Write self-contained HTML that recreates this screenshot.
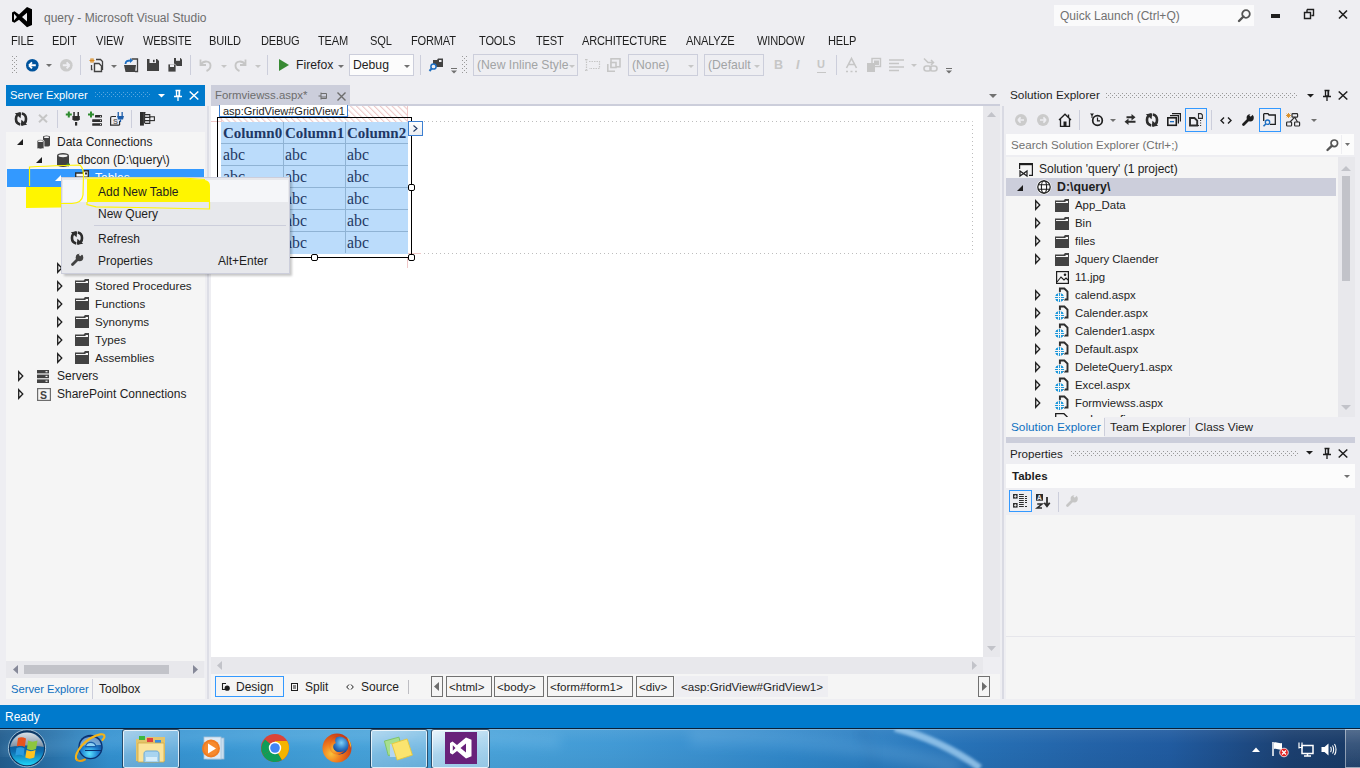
<!DOCTYPE html>
<html><head><meta charset="utf-8">
<style>
*{box-sizing:border-box;margin:0;padding:0}
html,body{width:1360px;height:768px;overflow:hidden;background:#EEEEF2;font-family:"Liberation Sans",sans-serif;font-size:12px;color:#1E1E1E;position:relative}
.a{position:absolute}
.t{position:absolute;white-space:pre;line-height:14px}
svg{position:absolute;overflow:visible}
</style></head><body>
<svg style="left:12px;top:7px" width="21" height="21" viewBox="0 0 21 21"><path d="M15 0 L20 2.2 L20 18 L15 20.2 L7 12.7 L2.5 15.8 L0 14.6 L0 5.4 L2.5 4.2 L7 7.5 Z M15 5.8 L10 10.1 L15 14.4 Z M2 6.8 L2 13.4 L4.9 10.1 Z" fill="#000" fill-rule="evenodd"/></svg>
<div class="t" style="left:44px;top:11px;color:#6D6D6D;font-size:12px;">query - Microsoft Visual Studio</div>
<div class="a" style="left:1054px;top:5px;width:200px;height:21px;background:#FAFAFB;"></div>
<div class="t" style="left:1060px;top:9px;color:#717171;font-size:12px;">Quick Launch (Ctrl+Q)</div>
<svg style="left:1238px;top:9px" width="13" height="13" viewBox="0 0 13 13"><circle cx="8" cy="5" r="3.8" fill="none" stroke="#555" stroke-width="1.8"/><path d="M5.5 7.5 L1 12" stroke="#555" stroke-width="2.4" stroke-linecap="round"/></svg>
<div class="a" style="left:1271px;top:14px;width:9px;height:4px;background:#1E1E1E;"></div>
<svg style="left:1304px;top:9px" width="10" height="10" viewBox="0 0 10 10"><path d="M3 .5 H9.5 V6.5 H7.5 M.5 3.5 H6.5 V9.5 H.5 Z M3 .5 V3.5" fill="none" stroke="#1E1E1E" stroke-width="1.4"/></svg>
<svg style="left:1338px;top:10px" width="10" height="9" viewBox="0 0 10 9"><path d="M1 0.5 L9 8.5 M9 0.5 L1 8.5" stroke="#1E1E1E" stroke-width="1.6"/></svg>
<div class="t" style="left:11px;top:33.5px;color:#1E1E1E;font-size:12.3px;letter-spacing:-0.2px;transform:scaleX(0.9);transform-origin:0 0">FILE</div>
<div class="t" style="left:52px;top:33.5px;color:#1E1E1E;font-size:12.3px;letter-spacing:-0.2px;transform:scaleX(0.9);transform-origin:0 0">EDIT</div>
<div class="t" style="left:96px;top:33.5px;color:#1E1E1E;font-size:12.3px;letter-spacing:-0.2px;transform:scaleX(0.9);transform-origin:0 0">VIEW</div>
<div class="t" style="left:143px;top:33.5px;color:#1E1E1E;font-size:12.3px;letter-spacing:-0.2px;transform:scaleX(0.9);transform-origin:0 0">WEBSITE</div>
<div class="t" style="left:209px;top:33.5px;color:#1E1E1E;font-size:12.3px;letter-spacing:-0.2px;transform:scaleX(0.9);transform-origin:0 0">BUILD</div>
<div class="t" style="left:261px;top:33.5px;color:#1E1E1E;font-size:12.3px;letter-spacing:-0.2px;transform:scaleX(0.9);transform-origin:0 0">DEBUG</div>
<div class="t" style="left:318px;top:33.5px;color:#1E1E1E;font-size:12.3px;letter-spacing:-0.2px;transform:scaleX(0.9);transform-origin:0 0">TEAM</div>
<div class="t" style="left:370px;top:33.5px;color:#1E1E1E;font-size:12.3px;letter-spacing:-0.2px;transform:scaleX(0.9);transform-origin:0 0">SQL</div>
<div class="t" style="left:411px;top:33.5px;color:#1E1E1E;font-size:12.3px;letter-spacing:-0.2px;transform:scaleX(0.9);transform-origin:0 0">FORMAT</div>
<div class="t" style="left:479px;top:33.5px;color:#1E1E1E;font-size:12.3px;letter-spacing:-0.2px;transform:scaleX(0.9);transform-origin:0 0">TOOLS</div>
<div class="t" style="left:536px;top:33.5px;color:#1E1E1E;font-size:12.3px;letter-spacing:-0.2px;transform:scaleX(0.9);transform-origin:0 0">TEST</div>
<div class="t" style="left:582px;top:33.5px;color:#1E1E1E;font-size:12.3px;letter-spacing:-0.2px;transform:scaleX(0.9);transform-origin:0 0">ARCHITECTURE</div>
<div class="t" style="left:686px;top:33.5px;color:#1E1E1E;font-size:12.3px;letter-spacing:-0.2px;transform:scaleX(0.9);transform-origin:0 0">ANALYZE</div>
<div class="t" style="left:757px;top:33.5px;color:#1E1E1E;font-size:12.3px;letter-spacing:-0.2px;transform:scaleX(0.9);transform-origin:0 0">WINDOW</div>
<div class="t" style="left:828px;top:33.5px;color:#1E1E1E;font-size:12.3px;letter-spacing:-0.2px;transform:scaleX(0.9);transform-origin:0 0">HELP</div>
<svg width="0" height="0" style="position:absolute"><defs><pattern id="grip" width="4" height="4" patternUnits="userSpaceOnUse"><rect x="0" y="0" width="1" height="1" fill="#999"/><rect x="2" y="2" width="1" height="1" fill="#999"/></pattern><pattern id="gripd" width="4" height="4" patternUnits="userSpaceOnUse"><rect x="0" y="0" width="1" height="1" fill="#B0B0BA"/><rect x="2" y="2" width="1" height="1" fill="#B0B0BA"/></pattern><pattern id="gripw" width="4" height="4" patternUnits="userSpaceOnUse"><rect x="0" y="0" width="1" height="1" fill="#5AA7E0"/><rect x="2" y="2" width="1" height="1" fill="#5AA7E0"/></pattern></defs></svg>
<svg style="left:12px;top:56px" width="6" height="17" viewBox="0 0 6 17"><rect width="6" height="17" fill="url(#grip)"/></svg>
<svg style="left:26px;top:59px" width="13" height="13" viewBox="0 0 13 13"><circle cx="6.3" cy="6.3" r="6.3" fill="#00539C"/><path d="M3 6.3 L6 3.3 M3 6.3 L6 9.3 M3.2 6.3 H9.8" stroke="#fff" stroke-width="1.9" fill="none"/></svg>
<svg style="left:46px;top:64px" width="6" height="3" viewBox="0 0 6 3"><path d="M0 0 H6 L3 3 Z" fill="#717171"/></svg>
<svg style="left:60px;top:59px" width="13" height="13" viewBox="0 0 13 13"><circle cx="6.3" cy="6.3" r="6.3" fill="#CBCBCB"/><path d="M9.6 6.3 L6.6 3.3 M9.6 6.3 L6.6 9.3 M2.8 6.3 H9.4" stroke="#EEEEF2" stroke-width="1.9" fill="none"/></svg>
<div class="a" style="left:80px;top:55px;width:1px;height:20px;background:#CCCEDB;"></div>
<svg style="left:89px;top:58px" width="14" height="14" viewBox="0 0 14 14"><path d="M3 0 V5 M0.5 2.5 H5.5 M1 .7 L5 4.3 M5 .7 L1 4.3" stroke="#D88A1E" stroke-width="1"/><path d="M7 1.5 H11.5 L13.5 3.5 V12 M2.5 7 V11.5 H3.5" fill="none" stroke="#424242" stroke-width="1.3"/><path d="M5.5 5.5 H10 L12.5 8 V13.5 H5.5 Z" fill="#F5F5F5" stroke="#424242" stroke-width="1.4"/></svg>
<svg style="left:111px;top:65px" width="6" height="3" viewBox="0 0 6 3"><path d="M0 0 H6 L3 3 Z" fill="#717171"/></svg>
<svg style="left:124px;top:58px" width="14" height="14" viewBox="0 0 14 14"><path d="M7.5 1 H13.5 V13.5 H11" fill="none" stroke="#424242" stroke-width="1.3"/><path d="M0 7 H12 L11 14 H1.5 Z" fill="#424242"/><path d="M1.5 6 C1.5 3 3.5 2.5 7 2.5" fill="none" stroke="#1E6FC2" stroke-width="1.8"/><path d="M6 0 L9 2.5 L6 5 Z" fill="#1E6FC2"/></svg>
<svg style="left:147px;top:59px" width="12" height="12" viewBox="0 0 12 12"><path d="M0 0 H10 L12 2 V12 H0 Z" fill="#424242"/><rect x="2.5" y="0" width="6.5" height="4" fill="#EEEEF2"/><rect x="6" y="0.8" width="1.6" height="2.4" fill="#424242"/></svg>
<svg style="left:168px;top:58px" width="14" height="14" viewBox="0 0 14 14"><path d="M6 0 H12.5 L14 1.5 V8 H6 Z" fill="#424242"/><rect x="8" y="0" width="4" height="2.8" fill="#EEEEF2"/><path d="M0 6 H6.5 L8 7.5 V14 H0 Z" fill="#424242" stroke="#EEEEF2" stroke-width="0.8"/><rect x="2" y="6.4" width="4" height="2.6" fill="#EEEEF2"/></svg>
<div class="a" style="left:190px;top:55px;width:1px;height:20px;background:#CCCEDB;"></div>
<svg style="left:198px;top:58px" width="14" height="14" viewBox="0 0 14 14"><path d="M2.5 1.5 V7 H8" fill="none" stroke="#C6C6C6" stroke-width="1.8"/><path d="M2.8 6.5 C6 2 12.5 3 12.5 7.5 C12.5 10 11 12 8.5 13" fill="none" stroke="#C6C6C6" stroke-width="1.9"/></svg>
<svg style="left:221px;top:65px" width="6" height="3" viewBox="0 0 6 3"><path d="M0 0 H6 L3 3 Z" fill="#C6C6C6"/></svg>
<svg style="left:234px;top:58px" width="14" height="14" viewBox="0 0 14 14"><path d="M11.5 1.5 V7 H6" fill="none" stroke="#C6C6C6" stroke-width="1.8"/><path d="M11.2 6.5 C8 2 1.5 3 1.5 7.5 C1.5 10 3 12 5.5 13" fill="none" stroke="#C6C6C6" stroke-width="1.9"/></svg>
<svg style="left:255px;top:65px" width="6" height="3" viewBox="0 0 6 3"><path d="M0 0 H6 L3 3 Z" fill="#C6C6C6"/></svg>
<div class="a" style="left:267px;top:55px;width:1px;height:20px;background:#CCCEDB;"></div>
<svg style="left:279px;top:59px" width="10" height="12" viewBox="0 0 10 12"><path d="M0 0 L10 6 L0 12 Z" fill="#388A34"/></svg>
<div class="t" style="left:296px;top:58px;color:#1E1E1E;font-size:12.2px;">Firefox</div>
<svg style="left:338px;top:65px" width="6" height="3" viewBox="0 0 6 3"><path d="M0 0 H6 L3 3 Z" fill="#717171"/></svg>
<div class="a" style="left:349px;top:54px;width:65px;height:22px;background:#FCFCFC;border:1px solid #CCCEDB"></div>
<div class="t" style="left:353px;top:58px;color:#1E1E1E;font-size:12.2px;">Debug</div>
<svg style="left:404px;top:65px" width="6" height="3" viewBox="0 0 6 3"><path d="M0 0 H6 L3 3 Z" fill="#717171"/></svg>
<div class="a" style="left:420px;top:55px;width:1px;height:20px;background:#CCCEDB;"></div>
<svg style="left:429px;top:58px" width="15" height="14" viewBox="0 0 15 14"><path d="M4 2 H8 L9 0.5 H14 V9 H4 Z" fill="#424242"/><rect x="10" y="2" width="2.5" height="2" fill="#EEEEF2"/><circle cx="4.5" cy="8.5" r="2.6" fill="#EEEEF2" stroke="#1E6FC2" stroke-width="1.5"/><path d="M2.7 10.3 L0.5 13" stroke="#1E6FC2" stroke-width="2"/></svg>
<svg style="left:451px;top:68px" width="6" height="6" viewBox="0 0 6 6"><rect x="0" y="0" width="6" height="1" fill="#717171"/><path d="M0 2.5 H6 L3 5.5 Z" fill="#717171"/></svg>
<svg style="left:462px;top:56px" width="6" height="17" viewBox="0 0 6 17"><rect width="6" height="17" fill="url(#grip)"/></svg>
<div class="a" style="left:473px;top:54px;width:105px;height:22px;background:transparent;border:1px solid #CCCEDB"></div>
<div class="t" style="left:477px;top:58px;color:#A2A4A5;font-size:12.2px;width:92px;overflow:hidden">(New Inline Style</div>
<svg style="left:569px;top:65px" width="6" height="3" viewBox="0 0 6 3"><path d="M0 0 H6 L3 3 Z" fill="#C6C6C6"/></svg>
<svg style="left:585px;top:59px" width="15" height="12" viewBox="0 0 15 12"><path d="M1.5 0 V12 M0 .7 H3 M0 11.3 H3 M4 2.5 H14.5 V9.5 H4" fill="none" stroke="#C6C6C6" stroke-width="1.2" stroke-dasharray="1.5 1"/></svg>
<svg style="left:607px;top:58px" width="14" height="14" viewBox="0 0 14 14"><rect x="4" y="0.8" width="9" height="8" fill="none" stroke="#C6C6C6" stroke-width="1.6"/><rect x="4" y="4.5" width="5" height="5" fill="#EEEEF2" stroke="#C6C6C6" stroke-width="1.6"/><path d="M0.8 6 V13.2 H8" fill="none" stroke="#C6C6C6" stroke-width="1.6"/></svg>
<div class="a" style="left:628px;top:54px;width:70px;height:22px;background:transparent;border:1px solid #CCCEDB"></div>
<div class="t" style="left:632px;top:58px;color:#A2A4A5;font-size:12.2px;">(None)</div>
<svg style="left:688px;top:65px" width="6" height="3" viewBox="0 0 6 3"><path d="M0 0 H6 L3 3 Z" fill="#C6C6C6"/></svg>
<div class="a" style="left:704px;top:54px;width:60px;height:22px;background:transparent;border:1px solid #CCCEDB"></div>
<div class="t" style="left:708px;top:58px;color:#A2A4A5;font-size:12.2px;width:46px;overflow:hidden">(Default</div>
<svg style="left:754px;top:65px" width="6" height="3" viewBox="0 0 6 3"><path d="M0 0 H6 L3 3 Z" fill="#C6C6C6"/></svg>
<div class="t" style="left:774px;top:58px;color:#C6C6C6;font-size:12.5px;font-weight:bold">B</div>
<div class="t" style="left:796px;top:58px;color:#C6C6C6;font-size:12.5px;font-style:italic;font-weight:bold">I</div>
<div class="t" style="left:817px;top:57px;color:#C6C6C6;font-size:11px;font-weight:bold">U</div>
<div class="a" style="left:817px;top:72px;width:9px;height:1px;background:#C6C6C6;"></div>
<div class="a" style="left:836px;top:55px;width:1px;height:20px;background:#CCCEDB;"></div>
<svg style="left:845px;top:58px" width="14" height="15" viewBox="0 0 14 15"><path d="M1.5 10 L6.5 0.5 L11.5 10 M3.5 6.5 H9.5" fill="none" stroke="#C6C6C6" stroke-width="1.6"/><path d="M1 13.5 H13" stroke="#C6C6C6" stroke-width="1.6" stroke-dasharray="2 2.5"/></svg>
<svg style="left:867px;top:58px" width="14" height="14" viewBox="0 0 14 14"><rect x="5" y="0.5" width="8.5" height="8" fill="none" stroke="#C6C6C6" stroke-width="1.4"/><rect x="0" y="5" width="8" height="9" fill="#C6C6C6"/><rect x="7" y="2.5" width="5" height="4.5" fill="#C6C6C6"/></svg>
<svg style="left:889px;top:59px" width="15" height="12" viewBox="0 0 15 12"><path d="M0 1 H15 M0 4.5 H10 M0 8 H15 M0 11.5 H10" stroke="#C6C6C6" stroke-width="1.7"/></svg>
<svg style="left:911px;top:64px" width="6" height="3" viewBox="0 0 6 3"><path d="M0 0 H6 L3 3 Z" fill="#C6C6C6"/></svg>
<svg style="left:923px;top:58px" width="15" height="14" viewBox="0 0 15 14"><path d="M1 0.5 L5 4.5 H10 M8 2 L10.5 4.5 L8 7" fill="none" stroke="#C6C6C6" stroke-width="1.5"/><rect x="1" y="8" width="7" height="5" rx="2.5" fill="none" stroke="#C6C6C6" stroke-width="1.6"/><rect x="7" y="8" width="7" height="5" rx="2.5" fill="none" stroke="#C6C6C6" stroke-width="1.6"/></svg>
<svg style="left:946px;top:68px" width="6" height="6" viewBox="0 0 6 6"><rect x="0" y="0" width="6" height="1" fill="#717171"/><path d="M0 2.5 H6 L3 5.5 Z" fill="#717171"/></svg>
<div class="a" style="left:6px;top:85px;width:199px;height:21px;background:#007ACC;"></div>
<div class="t" style="left:10px;top:88px;color:#FFFFFF;font-size:11.2px;">Server Explorer</div>
<svg style="left:95px;top:92px" width="56" height="6" viewBox="0 0 56 6"><rect width="56" height="6" fill="url(#gripw)"/></svg>
<svg style="left:158px;top:94px" width="7" height="4" viewBox="0 0 7 4"><path d="M0 0 H7 L3.5 3.5 Z" fill="#fff"/></svg>
<svg style="left:174px;top:90px" width="8" height="11" viewBox="0 0 8 11"><path d="M1.5 0.5 H6.5 M2.5 0.5 V6 H5.5 V0.5 M0 6.5 H8 M4 6.5 V11" fill="none" stroke="#fff" stroke-width="1.3"/><rect x="4.5" y="1" width="1.2" height="5" fill="#fff"/></svg>
<svg style="left:189px;top:91px" width="10" height="9" viewBox="0 0 10 9"><path d="M.7 .5 L9.3 8.5 M9.3 .5 L.7 8.5" stroke="#fff" stroke-width="1.5"/></svg>
<svg style="left:14px;top:112px" width="14" height="14" viewBox="0 0 14 14"><path d="M6.2 1.6 A5.2 5.5 0 0 0 6.2 12.4" fill="none" stroke="#2D2D2D" stroke-width="2.6"/><path d="M7.8 1.6 A5.2 5.5 0 0 1 7.8 12.4" fill="none" stroke="#2D2D2D" stroke-width="2.6"/><path d="M0.8 1.2 L7.2 0.3 L6.6 6.2 Z" fill="#2D2D2D"/><path d="M13.2 12.8 L6.8 13.7 L7.4 7.8 Z" fill="#2D2D2D"/></svg>
<svg style="left:38px;top:114px" width="10" height="9" viewBox="0 0 10 9"><path d="M1 .8 L9 8.2 M9 .8 L1 8.2" stroke="#C6C6C6" stroke-width="2"/></svg>
<div class="a" style="left:57px;top:110px;width:1px;height:18px;background:#CCCEDB;"></div>
<svg style="left:65px;top:111px" width="16" height="15" viewBox="0 0 16 15"><path d="M0.8 3.5 H6.8 M3.8 0.5 V6.5" stroke="#2E8B2E" stroke-width="2"/><rect x="8.3" y="1" width="1.5" height="4" fill="#2D2D2D"/><rect x="12.5" y="1" width="1.5" height="4" fill="#2D2D2D"/><path d="M7.4 5 H14.8 V8.3 L13.3 9.8 H8.9 L7.4 8.3 Z" fill="#2D2D2D"/><rect x="10" y="11" width="2.2" height="3.6" fill="#2D2D2D"/></svg>
<svg style="left:88px;top:111px" width="15" height="15" viewBox="0 0 15 15"><path d="M0 3.5 H6 M3 0.5 V6.5" stroke="#2E8B2E" stroke-width="2"/><rect x="7" y="4" width="7" height="2.6" rx="0.5" fill="#2D2D2D"/><rect x="4.2" y="8.3" width="9.8" height="2.6" rx="0.5" fill="#2D2D2D"/><rect x="4.2" y="12.2" width="9.8" height="2.6" rx="0.5" fill="#2D2D2D"/><rect x="12" y="4.9" width="1" height="0.9" fill="#EEEEF2"/><rect x="12" y="9.2" width="1" height="0.9" fill="#EEEEF2"/><rect x="12" y="13.1" width="1" height="0.9" fill="#EEEEF2"/></svg>
<svg style="left:110px;top:112px" width="15" height="14" viewBox="0 0 15 14"><path d="M9.6 13.1 H0.6 V6 Q0.6 4.5 2 4.5 H6" fill="none" stroke="#2D2D2D" stroke-width="1.2"/><path d="M9.6 9 V13.1" stroke="#2D2D2D" stroke-width="1.2"/><text x="3" y="12" font-size="7.5" font-family="Liberation Sans" font-weight="bold" fill="#6D6D6D">S</text><rect x="7.6" y="0" width="1.3" height="4" fill="#1C5DAA"/><rect x="11.5" y="0" width="1.3" height="4" fill="#1C5DAA"/><path d="M7 4 H14 L13 7.5 H8 Z" fill="#1C5DAA"/><rect x="9.8" y="7.5" width="1.3" height="2.5" fill="#1C5DAA"/></svg>
<div class="a" style="left:131px;top:110px;width:1px;height:18px;background:#CCCEDB;"></div>
<svg style="left:140px;top:112px" width="15" height="14" viewBox="0 0 15 14"><rect x="0" y="0" width="3.9" height="13.6" fill="#2D2D2D"/><path d="M3.9 0.6 H5.5 M4.6 0.6 V11 M4.6 2.6 H9.8 V5.4 H4.6 M4.6 8.6 H9.8 V11.4 H4.6" fill="none" stroke="#2D2D2D" stroke-width="1.1"/><rect x="9.8" y="4.8" width="4.6" height="3.8" fill="none" stroke="#2D2D2D" stroke-width="1.1"/></svg>
<div class="a" style="left:6px;top:132px;width:199px;height:529px;background:#F5F5F5;"></div>
<svg style="left:17px;top:139px" width="6" height="6" viewBox="0 0 6 6"><path d="M6 0 V6 H0 Z" fill="#1E1E1E"/></svg>
<svg style="left:37px;top:135px" width="14" height="14" viewBox="0 0 14 14"><path d="M6 2 A3.5 1.5 0 0 1 13 2 V10 A3.5 1.5 0 0 1 6 10 Z" fill="#424242"/><ellipse cx="9.5" cy="2.2" rx="2.6" ry="0.9" fill="#F5F5F5"/><path d="M0 6 A3.5 1.5 0 0 1 7 6 V12.5 A3.5 1.5 0 0 1 0 12.5 Z" fill="#424242" stroke="#F5F5F5" stroke-width="0.8"/><ellipse cx="3.5" cy="6.2" rx="2.6" ry="0.9" fill="#F5F5F5"/></svg>
<div class="t" style="left:57px;top:135px;color:#1E1E1E;font-size:12px;">Data Connections</div>
<svg style="left:36px;top:157px" width="6" height="6" viewBox="0 0 6 6"><path d="M6 0 V6 H0 Z" fill="#1E1E1E"/></svg>
<svg style="left:57px;top:153px" width="13" height="14" viewBox="0 0 13 14"><path d="M0 2.5 A6 2.5 0 0 1 12 2.5 V11.5 A6 2.5 0 0 1 0 11.5 Z" fill="#424242"/><ellipse cx="6" cy="2.8" rx="4.6" ry="1.4" fill="#F5F5F5"/><path d="M9.5 11.5 H13 M10.5 10.3 V11 M12 10.3 V11 M11.2 12 V13.5" stroke="#388A34" stroke-width="1"/></svg>
<div class="t" style="left:77px;top:153px;color:#1E1E1E;font-size:12px;">dbcon (D:\query\)</div>
<div class="a" style="left:7px;top:169px;width:197px;height:18px;background:#3399FF;"></div>
<svg style="left:55px;top:175px" width="6" height="6" viewBox="0 0 6 6"><path d="M6 0 V6 H0 Z" fill="#FFFFFF"/></svg>
<svg style="left:75px;top:170px" width="14" height="8" viewBox="0 0 14 8"><path d="M0.7 3 H8 L9 0.7 H13.3 V7.3 H0.7 Z" fill="#F5F5F5" stroke="#2D2D2D" stroke-width="1.4"/><rect x="10" y="2.5" width="2" height="2" fill="#2D2D2D"/></svg>
<div class="t" style="left:95px;top:171px;color:#FFFFFF;font-size:12px;">Tables</div>
<svg style="left:57px;top:263px" width="6" height="10" viewBox="0 0 6 10"><path d="M0.7 0.7 L4.8 5 L0.7 9.3 Z" fill="none" stroke="#1E1E1E" stroke-width="1.3"/></svg>
<svg style="left:57px;top:281px" width="6" height="10" viewBox="0 0 6 10"><path d="M0.7 0.7 L4.8 5 L0.7 9.3 Z" fill="none" stroke="#1E1E1E" stroke-width="1.3"/></svg>
<svg style="left:75px;top:279px" width="14" height="13" viewBox="0 0 14 13"><path d="M0 1.5 H8.5 L10 0 H14 V13 H0 Z" fill="#424242"/><path d="M1 3 H10.2 L11 2 H13 V4 H1 Z" fill="#F5F5F5"/></svg>
<div class="t" style="left:95px;top:279px;color:#1E1E1E;font-size:11.6px;">Stored Procedures</div>
<svg style="left:57px;top:299px" width="6" height="10" viewBox="0 0 6 10"><path d="M0.7 0.7 L4.8 5 L0.7 9.3 Z" fill="none" stroke="#1E1E1E" stroke-width="1.3"/></svg>
<svg style="left:75px;top:297px" width="14" height="13" viewBox="0 0 14 13"><path d="M0 1.5 H8.5 L10 0 H14 V13 H0 Z" fill="#424242"/><path d="M1 3 H10.2 L11 2 H13 V4 H1 Z" fill="#F5F5F5"/></svg>
<div class="t" style="left:95px;top:297px;color:#1E1E1E;font-size:11.6px;">Functions</div>
<svg style="left:57px;top:317px" width="6" height="10" viewBox="0 0 6 10"><path d="M0.7 0.7 L4.8 5 L0.7 9.3 Z" fill="none" stroke="#1E1E1E" stroke-width="1.3"/></svg>
<svg style="left:75px;top:315px" width="14" height="13" viewBox="0 0 14 13"><path d="M0 1.5 H8.5 L10 0 H14 V13 H0 Z" fill="#424242"/><path d="M1 3 H10.2 L11 2 H13 V4 H1 Z" fill="#F5F5F5"/></svg>
<div class="t" style="left:95px;top:315px;color:#1E1E1E;font-size:11.6px;">Synonyms</div>
<svg style="left:57px;top:335px" width="6" height="10" viewBox="0 0 6 10"><path d="M0.7 0.7 L4.8 5 L0.7 9.3 Z" fill="none" stroke="#1E1E1E" stroke-width="1.3"/></svg>
<svg style="left:75px;top:333px" width="14" height="13" viewBox="0 0 14 13"><path d="M0 1.5 H8.5 L10 0 H14 V13 H0 Z" fill="#424242"/><path d="M1 3 H10.2 L11 2 H13 V4 H1 Z" fill="#F5F5F5"/></svg>
<div class="t" style="left:95px;top:333px;color:#1E1E1E;font-size:11.6px;">Types</div>
<svg style="left:57px;top:353px" width="6" height="10" viewBox="0 0 6 10"><path d="M0.7 0.7 L4.8 5 L0.7 9.3 Z" fill="none" stroke="#1E1E1E" stroke-width="1.3"/></svg>
<svg style="left:75px;top:351px" width="14" height="13" viewBox="0 0 14 13"><path d="M0 1.5 H8.5 L10 0 H14 V13 H0 Z" fill="#424242"/><path d="M1 3 H10.2 L11 2 H13 V4 H1 Z" fill="#F5F5F5"/></svg>
<div class="t" style="left:95px;top:351px;color:#1E1E1E;font-size:11.6px;">Assemblies</div>
<svg style="left:18px;top:371px" width="6" height="10" viewBox="0 0 6 10"><path d="M0.7 0.7 L4.8 5 L0.7 9.3 Z" fill="none" stroke="#1E1E1E" stroke-width="1.3"/></svg>
<svg style="left:37px;top:370px" width="12" height="13" viewBox="0 0 12 13"><rect x="0" y="0" width="12" height="3.4" fill="#424242"/><rect x="0" y="4.6" width="12" height="3.6" fill="#424242"/><rect x="0" y="9.4" width="12" height="3.6" fill="#424242"/><rect x="8.5" y="1.1" width="2" height="1.2" fill="#F5F5F5"/><rect x="8.5" y="5.8" width="2" height="1.2" fill="#F5F5F5"/><rect x="8.5" y="10.6" width="2" height="1.2" fill="#F5F5F5"/></svg>
<div class="t" style="left:57px;top:369px;color:#1E1E1E;font-size:12px;">Servers</div>
<svg style="left:18px;top:389px" width="6" height="10" viewBox="0 0 6 10"><path d="M0.7 0.7 L4.8 5 L0.7 9.3 Z" fill="none" stroke="#1E1E1E" stroke-width="1.3"/></svg>
<svg style="left:37px;top:388px" width="14" height="13" viewBox="0 0 14 13"><rect x="0.6" y="0.6" width="12.8" height="11.8" fill="#F5F5F5" stroke="#6D6D6D" stroke-width="1.2"/><text x="3" y="10.5" font-size="10.5" font-family="Liberation Sans" font-weight="bold" fill="#424242">S</text></svg>
<div class="t" style="left:57px;top:387px;color:#1E1E1E;font-size:12px;">SharePoint Connections</div>
<div class="a" style="left:6px;top:661px;width:198px;height:17px;background:#E8E8EC;"></div>
<svg style="left:13px;top:665px" width="5" height="9" viewBox="0 0 5 9"><path d="M5 0 V9 L0 4.5 Z" fill="#868999"/></svg>
<div class="a" style="left:24px;top:665px;width:145px;height:9px;background:#C2C3C9;"></div>
<svg style="left:193px;top:665px" width="5" height="9" viewBox="0 0 5 9"><path d="M0 0 V9 L5 4.5 Z" fill="#868999"/></svg>
<div class="a" style="left:6px;top:678px;width:199px;height:21px;background:#F5F5F5;"></div>
<div class="t" style="left:11px;top:682px;color:#0E70C0;font-size:11.2px;">Server Explorer</div>
<div class="a" style="left:92px;top:679px;width:1px;height:20px;background:#CCCEDB;"></div>
<div class="t" style="left:99px;top:682px;color:#1E1E1E;font-size:12px;">Toolbox</div>
<div class="a" style="left:211px;top:85px;width:139px;height:20px;background:#CCCEDB;"></div>
<div class="t" style="left:215px;top:88px;color:#6D6D6D;font-size:11.4px;">Formviewss.aspx*</div>
<svg style="left:318px;top:92px" width="9" height="8" viewBox="0 0 9 8"><path d="M0.5 4 H3 M3 0.5 V7.5 M3 1.5 H8.5 V6.5 H3 M3 5 H8.5" fill="none" stroke="#6D6D6D" stroke-width="1"/></svg>
<svg style="left:337px;top:92px" width="9" height="9" viewBox="0 0 9 9"><path d="M.5 .5 L8.5 8.5 M8.5 .5 L.5 8.5" stroke="#6D6D6D" stroke-width="1.4"/></svg>
<svg style="left:989px;top:94px" width="8" height="4" viewBox="0 0 8 4"><path d="M0 0 H8 L4 4 Z" fill="#717171"/></svg>
<div class="a" style="left:211px;top:104px;width:789px;height:2px;background:#CCCEDB;"></div>
<div class="a" style="left:207px;top:106px;width:2px;height:593px;background:#DDDEE6;"></div>
<div class="a" style="left:211px;top:106px;width:772px;height:551px;background:#FFFFFF;"></div>
<div class="a" style="left:983px;top:106px;width:17px;height:551px;background:#E8E8EC;"></div>
<svg style="left:987px;top:112px" width="9" height="5" viewBox="0 0 9 5"><path d="M0 5 H9 L4.5 0 Z" fill="#C2C3C9"/></svg>
<svg style="left:987px;top:646px" width="9" height="5" viewBox="0 0 9 5"><path d="M0 0 H9 L4.5 5 Z" fill="#C2C3C9"/></svg>
<div class="a" style="left:211px;top:657px;width:772px;height:17px;background:#E8E8EC;"></div>
<svg style="left:217px;top:661px" width="5" height="9" viewBox="0 0 5 9"><path d="M5 0 V9 L0 4.5 Z" fill="#C2C3C9"/></svg>
<svg style="left:972px;top:661px" width="5" height="9" viewBox="0 0 5 9"><path d="M0 0 V9 L5 4.5 Z" fill="#C2C3C9"/></svg>
<div class="a" style="left:211px;top:674px;width:789px;height:25px;background:#F5F5F5;"></div>
<div class="a" style="left:215px;top:676px;width:69px;height:21px;background:transparent;border:1px solid #3399FF"></div>
<svg style="left:222px;top:683px" width="8" height="8" viewBox="0 0 8 8"><path d="M4 .5 H.5 V6.5 H3" fill="none" stroke="#1E1E1E" stroke-width="1.1"/><circle cx="5.2" cy="5.2" r="2.6" fill="#1E1E1E"/></svg>
<div class="t" style="left:236px;top:680px;color:#1E1E1E;font-size:12px;">Design</div>
<svg style="left:291px;top:683px" width="7" height="8" viewBox="0 0 7 8"><rect x=".5" y=".5" width="6" height="7" fill="none" stroke="#1E1E1E" stroke-width="1"/><path d="M2 3 H5 M2 5 H5" stroke="#1E1E1E" stroke-width="1"/></svg>
<div class="t" style="left:305px;top:680px;color:#1E1E1E;font-size:12px;">Split</div>
<svg style="left:346px;top:684px" width="8" height="6" viewBox="0 0 8 6"><path d="M3 .5 L.7 3 L3 5.5 M5 .5 L7.3 3 L5 5.5" fill="none" stroke="#1E1E1E" stroke-width="1"/></svg>
<div class="t" style="left:361px;top:680px;color:#1E1E1E;font-size:12px;">Source</div>
<div class="a" style="left:408px;top:680px;width:1px;height:14px;background:#BDBDC2;"></div>
<div class="a" style="left:431px;top:676px;width:12px;height:21px;background:transparent;border:1px solid #717171"></div>
<svg style="left:434px;top:682px" width="5" height="9" viewBox="0 0 5 9"><path d="M5 0 V9 L0 4.5 Z" fill="#6D6D6D"/></svg>
<div class="a" style="left:446px;top:676px;width:46px;height:21px;background:transparent;border:1px solid #717171"></div>
<div class="t" style="left:449px;top:680px;color:#1E1E1E;font-size:11.6px;">&lt;html&gt;</div>
<div class="a" style="left:494px;top:676px;width:50px;height:21px;background:transparent;border:1px solid #717171"></div>
<div class="t" style="left:497px;top:680px;color:#1E1E1E;font-size:11.6px;">&lt;body&gt;</div>
<div class="a" style="left:547px;top:676px;width:86px;height:21px;background:transparent;border:1px solid #717171"></div>
<div class="t" style="left:550px;top:680px;color:#1E1E1E;font-size:11.6px;">&lt;form#form1&gt;</div>
<div class="a" style="left:636px;top:676px;width:38px;height:21px;background:transparent;border:1px solid #717171"></div>
<div class="t" style="left:639px;top:680px;color:#1E1E1E;font-size:11.6px;">&lt;div&gt;</div>
<div class="a" style="left:675px;top:676px;width:153px;height:21px;background:#EEEEF2;"></div>
<div class="t" style="left:681px;top:680px;color:#1E1E1E;font-size:11.6px;">&lt;asp:GridView#GridView1&gt;</div>
<div class="a" style="left:978px;top:676px;width:12px;height:21px;background:transparent;border:1px solid #717171"></div>
<svg style="left:982px;top:682px" width="5" height="9" viewBox="0 0 5 9"><path d="M0 0 V9 L5 4.5 Z" fill="#6D6D6D"/></svg>
<svg width="0" height="0" style="position:absolute"><defs><pattern id="hatch" width="4.2" height="4.2" patternUnits="userSpaceOnUse" patternTransform="rotate(-45)"><rect width="1.1" height="4.2" fill="#EDCACA"/></pattern></defs></svg>
<svg style="left:219px;top:106px" width="189" height="16" viewBox="0 0 189 16"><rect x="0" y="11" width="189" height="5" fill="url(#hatch)"/><rect x="128" y="0" width="61" height="11" fill="url(#hatch)"/></svg>
<div class="a" style="left:211px;top:121px;width:10px;height:1px;background:#F0C8C8;"></div>
<div class="a" style="left:221px;top:117px;width:1px;height:5px;background:#F0C8C8;"></div>
<div class="a" style="left:407px;top:106px;width:1px;height:16px;background:#F0C8C8;"></div>
<div class="a" style="left:407px;top:253px;width:14px;height:1px;background:#F0C8C8;"></div>
<div class="a" style="left:407px;top:257px;width:1px;height:11px;background:#F0C8C8;"></div>
<div class="a" style="left:219px;top:105px;width:129px;height:12px;background:#FFFFFF;border:1px solid #3C7FD1;border-top:none"></div>
<div class="t" style="left:223px;top:104px;color:#1E1E1E;font-size:11px;line-height:14px">asp:GridView#GridView1</div>
<svg style="left:420px;top:121px" width="556" height="134" viewBox="0 0 556 134"><path d="M4 0.5 H552.5 V132.5 H4" fill="none" stroke="#BDBDBD" stroke-width="1" stroke-dasharray="1 3"/></svg>
<div class="a" style="left:217px;top:117px;width:195px;height:141px;background:transparent;border:1px solid #000"></div>
<div class="a" style="left:221px;top:122px;width:187px;height:132px;background:#BBDCFB;"></div>
<div class="a" style="left:283px;top:122px;width:1px;height:131px;background:#8FB3D4;"></div>
<div class="a" style="left:345px;top:122px;width:1px;height:131px;background:#8FB3D4;"></div>
<div class="a" style="left:221px;top:143px;width:187px;height:1px;background:#8FB3D4;"></div>
<div class="a" style="left:221px;top:165px;width:187px;height:1px;background:#8FB3D4;"></div>
<div class="a" style="left:221px;top:187px;width:187px;height:1px;background:#8FB3D4;"></div>
<div class="a" style="left:221px;top:209px;width:187px;height:1px;background:#8FB3D4;"></div>
<div class="a" style="left:221px;top:231px;width:187px;height:1px;background:#8FB3D4;"></div>
<div class="t" style="left:223px;top:125px;color:#1F3864;font-size:15px;font-family:'Liberation Serif',serif;font-weight:bold;line-height:17px">Column0</div>
<div class="t" style="left:223px;top:146px;color:#1F3864;font-size:15.8px;font-family:'Liberation Serif',serif;line-height:17px">abc</div>
<div class="t" style="left:223px;top:168px;color:#1F3864;font-size:15.8px;font-family:'Liberation Serif',serif;line-height:17px">abc</div>
<div class="t" style="left:223px;top:190px;color:#1F3864;font-size:15.8px;font-family:'Liberation Serif',serif;line-height:17px">abc</div>
<div class="t" style="left:223px;top:212px;color:#1F3864;font-size:15.8px;font-family:'Liberation Serif',serif;line-height:17px">abc</div>
<div class="t" style="left:223px;top:234px;color:#1F3864;font-size:15.8px;font-family:'Liberation Serif',serif;line-height:17px">abc</div>
<div class="t" style="left:285px;top:125px;color:#1F3864;font-size:15px;font-family:'Liberation Serif',serif;font-weight:bold;line-height:17px">Column1</div>
<div class="t" style="left:285px;top:146px;color:#1F3864;font-size:15.8px;font-family:'Liberation Serif',serif;line-height:17px">abc</div>
<div class="t" style="left:285px;top:168px;color:#1F3864;font-size:15.8px;font-family:'Liberation Serif',serif;line-height:17px">abc</div>
<div class="t" style="left:285px;top:190px;color:#1F3864;font-size:15.8px;font-family:'Liberation Serif',serif;line-height:17px">abc</div>
<div class="t" style="left:285px;top:212px;color:#1F3864;font-size:15.8px;font-family:'Liberation Serif',serif;line-height:17px">abc</div>
<div class="t" style="left:285px;top:234px;color:#1F3864;font-size:15.8px;font-family:'Liberation Serif',serif;line-height:17px">abc</div>
<div class="t" style="left:347px;top:125px;color:#1F3864;font-size:15px;font-family:'Liberation Serif',serif;font-weight:bold;line-height:17px">Column2</div>
<div class="t" style="left:347px;top:146px;color:#1F3864;font-size:15.8px;font-family:'Liberation Serif',serif;line-height:17px">abc</div>
<div class="t" style="left:347px;top:168px;color:#1F3864;font-size:15.8px;font-family:'Liberation Serif',serif;line-height:17px">abc</div>
<div class="t" style="left:347px;top:190px;color:#1F3864;font-size:15.8px;font-family:'Liberation Serif',serif;line-height:17px">abc</div>
<div class="t" style="left:347px;top:212px;color:#1F3864;font-size:15.8px;font-family:'Liberation Serif',serif;line-height:17px">abc</div>
<div class="t" style="left:347px;top:234px;color:#1F3864;font-size:15.8px;font-family:'Liberation Serif',serif;line-height:17px">abc</div>
<div class="a" style="left:408px;top:184px;width:7px;height:7px;background:#FFFFFF;border:1px solid #000;border-radius:2px"></div>
<div class="a" style="left:311px;top:254px;width:7px;height:7px;background:#FFFFFF;border:1px solid #000;border-radius:2px"></div>
<div class="a" style="left:408px;top:254px;width:7px;height:7px;background:#FFFFFF;border:1px solid #000;border-radius:2px"></div>
<div class="a" style="left:408px;top:121px;width:15px;height:15px;background:#F4F8FC;border:1px solid #3C7FD1;background:linear-gradient(180deg,#FFFFFF,#E9ECF0)"></div>
<svg style="left:413px;top:125px" width="5" height="7" viewBox="0 0 5 7"><path d="M.5 .5 L4 3.5 L.5 6.5" fill="none" stroke="#1F3864" stroke-width="1.1"/></svg>
<div class="a" style="left:1002px;top:106px;width:2px;height:593px;background:#D9DAE3;"></div>
<div class="t" style="left:1010px;top:88px;color:#1E1E1E;font-size:11.8px;">Solution Explorer</div>
<svg style="left:1106px;top:93px" width="192" height="5" viewBox="0 0 192 5"><rect width="192" height="5" fill="url(#grip)"/></svg>
<svg style="left:1307px;top:94px" width="7" height="4" viewBox="0 0 7 4"><path d="M0 0 H7 L3.5 3.5 Z" fill="#1E1E1E"/></svg>
<svg style="left:1323px;top:90px" width="8" height="11" viewBox="0 0 8 11"><path d="M1.5 0.5 H6.5 M2.5 0.5 V6 H5.5 V0.5 M0 6.5 H8 M4 6.5 V11" fill="none" stroke="#1E1E1E" stroke-width="1.3"/><rect x="4.5" y="1" width="1.2" height="5" fill="#1E1E1E"/></svg>
<svg style="left:1338px;top:91px" width="10" height="9" viewBox="0 0 10 9"><path d="M.7 .5 L9.3 8.5 M9.3 .5 L.7 8.5" stroke="#1E1E1E" stroke-width="1.5"/></svg>
<svg style="left:1015px;top:114px" width="12" height="12" viewBox="0 0 12 12"><circle cx="6" cy="6" r="6" fill="#CBCBCB"/><path d="M3 6 L5.6 3.4 M3 6 L5.6 8.6 M3.2 6 H9" stroke="#EEEEF2" stroke-width="1.7" fill="none"/></svg>
<svg style="left:1037px;top:114px" width="12" height="12" viewBox="0 0 12 12"><circle cx="6" cy="6" r="6" fill="#CBCBCB"/><path d="M9 6 L6.4 3.4 M9 6 L6.4 8.6 M3 6 H8.8" stroke="#EEEEF2" stroke-width="1.7" fill="none"/></svg>
<svg style="left:1058px;top:113px" width="14" height="14" viewBox="0 0 14 14"><path d="M1 7 L7 1.2 L13 7 M2.5 5.8 V13.3 H11.5 V5.8" fill="none" stroke="#1E1E1E" stroke-width="1.3"/><rect x="5.5" y="8.5" width="3" height="4.8" fill="#1E1E1E"/><rect x="9.8" y="1.5" width="1.4" height="3" fill="#1E1E1E"/></svg>
<div class="a" style="left:1079px;top:110px;width:1px;height:20px;background:#CCCEDB;"></div>
<svg style="left:1090px;top:113px" width="13" height="13" viewBox="0 0 13 13"><path d="M0 0.5 H4 L2 3 Z" fill="#1E1E1E"/><path d="M2 2 V5" stroke="#1E1E1E" stroke-width="1"/><circle cx="7.5" cy="7.5" r="4.8" fill="none" stroke="#1E1E1E" stroke-width="1.7"/><path d="M7.5 4.5 V7.8 H10" fill="none" stroke="#1E1E1E" stroke-width="1.2"/></svg>
<svg style="left:1110px;top:119px" width="6" height="3" viewBox="0 0 6 3"><path d="M0 0 H6 L3 3 Z" fill="#717171"/></svg>
<svg style="left:1124px;top:114px" width="12" height="11" viewBox="0 0 12 11"><path d="M2.5 3.3 H9.5 M11.5 7.7 H2.5" fill="none" stroke="#2D2D2D" stroke-width="1.9"/><path d="M7.5 0 L11.5 3.3 L7.5 6.6 Z M4.5 4.4 L0.5 7.7 L4.5 11 Z" fill="#2D2D2D"/></svg>
<svg style="left:1145px;top:113px" width="14" height="14" viewBox="0 0 14 14"><path d="M6.2 1.6 A5.2 5.5 0 0 0 6.2 12.4" fill="none" stroke="#2D2D2D" stroke-width="2.6"/><path d="M7.8 1.6 A5.2 5.5 0 0 1 7.8 12.4" fill="none" stroke="#2D2D2D" stroke-width="2.6"/><path d="M0.8 1.2 L7.2 0.3 L6.6 6.2 Z" fill="#2D2D2D"/><path d="M13.2 12.8 L6.8 13.7 L7.4 7.8 Z" fill="#2D2D2D"/></svg>
<svg style="left:1167px;top:113px" width="14" height="13" viewBox="0 0 14 13"><path d="M5 .6 H13.4 V8.5 M3 2.6 H11.4 V10.5" fill="none" stroke="#1E1E1E" stroke-width="1.2"/><rect x="0.8" y="4.8" width="8.5" height="7.5" fill="#EEEEF2" stroke="#1E1E1E" stroke-width="1.6"/><rect x="3" y="8" width="4" height="1.3" fill="#1E6FC2"/></svg>
<div class="a" style="left:1185px;top:108px;width:22px;height:24px;background:transparent;border:1px solid #3399FF"></div>
<svg style="left:1189px;top:113px" width="14" height="14" viewBox="0 0 14 14"><path d="M1 5 H5.5 L8.2 7.7 V12.5 H1 Z" fill="none" stroke="#2D2D2D" stroke-width="1.9"/><path d="M9.5 0.6 H12 L13.4 2 V5.4 H9.5 Z" fill="none" stroke="#2D2D2D" stroke-width="1.1"/><path d="M11.6 7 V8 M11.6 9.5 V10.5 M9.5 12 V13 M11.6 12 V13" stroke="#2D2D2D" stroke-width="1.1"/></svg>
<div class="a" style="left:1211px;top:110px;width:1px;height:20px;background:#CCCEDB;"></div>
<svg style="left:1220px;top:117px" width="12" height="7" viewBox="0 0 12 7"><path d="M4 .5 L1 3.5 L4 6.5 M8 .5 L11 3.5 L8 6.5" fill="none" stroke="#1E1E1E" stroke-width="1.4"/></svg>
<svg style="left:1242px;top:113px" width="12" height="13" viewBox="0 0 12 13"><path d="M1.5 11.5 L6 7" stroke="#1E1E1E" stroke-width="2.8" stroke-linecap="round"/><circle cx="8.2" cy="4.8" r="3.6" fill="#1E1E1E"/><path d="M8 3 L10 1" stroke="#EEEEF2" stroke-width="2"/></svg>
<div class="a" style="left:1259px;top:108px;width:22px;height:24px;background:transparent;border:1px solid #3399FF"></div>
<svg style="left:1263px;top:113px" width="14" height="14" viewBox="0 0 14 14"><path d="M.7 .7 H5 L6 2 H12.3 V11.3 H7 M.7 .7 V8" fill="none" stroke="#1E1E1E" stroke-width="1.3"/><circle cx="4.5" cy="9.2" r="2.2" fill="none" stroke="#1E6FC2" stroke-width="1.3"/><path d="M3 10.8 L0.5 13.3" stroke="#1E6FC2" stroke-width="1.6"/></svg>
<svg style="left:1286px;top:113px" width="15" height="14" viewBox="0 0 15 14"><path d="M2.5 0 V5 M0 2.5 H5 M0.7 0.7 L4.3 4.3 M4.3 0.7 L0.7 4.3" stroke="#D88A1E" stroke-width="0.9"/><rect x="6" y="0.6" width="5.6" height="3.6" rx="0.8" fill="none" stroke="#2D2D2D" stroke-width="1.2"/><path d="M8.8 4.2 L4 9 M8.8 4.2 L11.5 9" fill="none" stroke="#2D2D2D" stroke-width="1.2"/><rect x="0.6" y="9" width="5" height="4" rx="0.8" fill="none" stroke="#2D2D2D" stroke-width="1.2"/><rect x="8.6" y="9" width="5" height="4" rx="0.8" fill="none" stroke="#2D2D2D" stroke-width="1.2"/></svg>
<svg style="left:1311px;top:119px" width="6" height="3" viewBox="0 0 6 3"><path d="M0 0 H6 L3 3 Z" fill="#717171"/></svg>
<div class="a" style="left:1006px;top:134px;width:348px;height:21px;background:#FCFCFC;"></div>
<div class="t" style="left:1011px;top:138px;color:#717171;font-size:11.6px;">Search Solution Explorer (Ctrl+;)</div>
<svg style="left:1326px;top:139px" width="13" height="12" viewBox="0 0 13 12"><circle cx="8.3" cy="4.3" r="3.3" fill="none" stroke="#555" stroke-width="1.7"/><path d="M6 6.7 L1.5 11" stroke="#555" stroke-width="2.4" stroke-linecap="round"/></svg>
<div class="a" style="left:1341px;top:135px;width:1px;height:19px;background:#EEEEF2;"></div>
<svg style="left:1345px;top:143px" width="5" height="3" viewBox="0 0 5 3"><path d="M0 0 H5 L2.5 3 Z" fill="#717171"/></svg>
<div class="a" style="left:1006px;top:157px;width:349px;height:260px;background:#F5F5F5;"></div>
<div class="a" style="left:1006px;top:178px;width:330px;height:18px;background:#CCCEDB;"></div>
<svg style="left:1019px;top:163px" width="14" height="13" viewBox="0 0 14 13"><path d="M.6 .6 H13.4 V12.4 H10" fill="none" stroke="#1E1E1E" stroke-width="1.2"/><rect x="0" y="0" width="14" height="2.2" fill="#1E1E1E"/><path d="M.6 2 V6" stroke="#1E1E1E" stroke-width="1.2"/><path d="M1 8 L4.5 10.5 L8 8 V13 L4.5 10.5 L1 13 Z" fill="none" stroke="#1E1E1E" stroke-width="1.2"/></svg>
<div class="t" style="left:1039px;top:162px;color:#1E1E1E;font-size:12px;">Solution 'query' (1 project)</div>
<svg style="left:1017px;top:185px" width="6" height="6" viewBox="0 0 6 6"><path d="M6 0 V6 H0 Z" fill="#1E1E1E"/></svg>
<svg style="left:1036px;top:179px" width="16" height="16" viewBox="0 0 16 16"><circle cx="8" cy="8" r="7.5" fill="#FFFFFF"/><circle cx="8" cy="8" r="6.2" fill="none" stroke="#1E1E1E" stroke-width="1.3"/><ellipse cx="8" cy="8" rx="2.6" ry="6.2" fill="none" stroke="#1E1E1E" stroke-width="1.1"/><path d="M2 5.8 H14 M2 10.2 H14" stroke="#1E1E1E" stroke-width="1.1"/></svg>
<div class="t" style="left:1057px;top:180px;color:#1E1E1E;font-size:12.3px;font-weight:bold">D:\query\</div>
<svg style="left:1035px;top:200px" width="6" height="10" viewBox="0 0 6 10"><path d="M0.7 0.7 L4.8 5 L0.7 9.3 Z" fill="none" stroke="#1E1E1E" stroke-width="1.3"/></svg>
<svg style="left:1055px;top:199px" width="14" height="13" viewBox="0 0 14 13"><path d="M0 1.5 H8.5 L10 0 H14 V13 H0 Z" fill="#424242"/><path d="M1 3 H10.2 L11 2 H13 V4 H1 Z" fill="#F5F5F5"/></svg>
<div class="t" style="left:1075px;top:198px;color:#1E1E1E;font-size:11.4px;">App_Data</div>
<svg style="left:1035px;top:218px" width="6" height="10" viewBox="0 0 6 10"><path d="M0.7 0.7 L4.8 5 L0.7 9.3 Z" fill="none" stroke="#1E1E1E" stroke-width="1.3"/></svg>
<svg style="left:1055px;top:217px" width="14" height="13" viewBox="0 0 14 13"><path d="M0 1.5 H8.5 L10 0 H14 V13 H0 Z" fill="#424242"/><path d="M1 3 H10.2 L11 2 H13 V4 H1 Z" fill="#F5F5F5"/></svg>
<div class="t" style="left:1075px;top:216px;color:#1E1E1E;font-size:11.4px;">Bin</div>
<svg style="left:1035px;top:236px" width="6" height="10" viewBox="0 0 6 10"><path d="M0.7 0.7 L4.8 5 L0.7 9.3 Z" fill="none" stroke="#1E1E1E" stroke-width="1.3"/></svg>
<svg style="left:1055px;top:235px" width="14" height="13" viewBox="0 0 14 13"><path d="M0 1.5 H8.5 L10 0 H14 V13 H0 Z" fill="#424242"/><path d="M1 3 H10.2 L11 2 H13 V4 H1 Z" fill="#F5F5F5"/></svg>
<div class="t" style="left:1075px;top:234px;color:#1E1E1E;font-size:11.4px;">files</div>
<svg style="left:1035px;top:254px" width="6" height="10" viewBox="0 0 6 10"><path d="M0.7 0.7 L4.8 5 L0.7 9.3 Z" fill="none" stroke="#1E1E1E" stroke-width="1.3"/></svg>
<svg style="left:1055px;top:253px" width="14" height="13" viewBox="0 0 14 13"><path d="M0 1.5 H8.5 L10 0 H14 V13 H0 Z" fill="#424242"/><path d="M1 3 H10.2 L11 2 H13 V4 H1 Z" fill="#F5F5F5"/></svg>
<div class="t" style="left:1075px;top:252px;color:#1E1E1E;font-size:11.4px;">Jquery Claender</div>
<svg style="left:1056px;top:271px" width="13" height="13" viewBox="0 0 13 13"><rect x=".6" y=".6" width="11.8" height="11.8" fill="none" stroke="#1E1E1E" stroke-width="1.2"/><path d="M1 11 L5 6 L8 9 L10 7 L12 9" fill="none" stroke="#1E1E1E" stroke-width="1.1"/><circle cx="9" cy="3.8" r="1.3" fill="#1E1E1E"/></svg>
<div class="t" style="left:1075px;top:270px;color:#1E1E1E;font-size:11.4px;">11.jpg</div>
<svg style="left:1035px;top:290px" width="6" height="10" viewBox="0 0 6 10"><path d="M0.7 0.7 L4.8 5 L0.7 9.3 Z" fill="none" stroke="#1E1E1E" stroke-width="1.3"/></svg>
<svg style="left:1055px;top:287px" width="14" height="14" viewBox="0 0 14 14"><path d="M4.9 7 V1.5 H9.3 L12.5 4.7 V12.5 H8" fill="none" stroke="#2D2D2D" stroke-width="1.9"/><circle cx="4.5" cy="10.5" r="4.6" fill="#1C97DA"/><path d="M3.5 6.2 V14.8 M5.5 6.2 V14.8 M0 9.5 H9 M0 11.5 H9" stroke="#F5F5F5" stroke-width="1"/><circle cx="4.5" cy="10.5" r="5.1" fill="none" stroke="#F5F5F5" stroke-width="1"/></svg>
<div class="t" style="left:1075px;top:288px;color:#1E1E1E;font-size:11.4px;">calend.aspx</div>
<svg style="left:1035px;top:308px" width="6" height="10" viewBox="0 0 6 10"><path d="M0.7 0.7 L4.8 5 L0.7 9.3 Z" fill="none" stroke="#1E1E1E" stroke-width="1.3"/></svg>
<svg style="left:1055px;top:305px" width="14" height="14" viewBox="0 0 14 14"><path d="M4.9 7 V1.5 H9.3 L12.5 4.7 V12.5 H8" fill="none" stroke="#2D2D2D" stroke-width="1.9"/><circle cx="4.5" cy="10.5" r="4.6" fill="#1C97DA"/><path d="M3.5 6.2 V14.8 M5.5 6.2 V14.8 M0 9.5 H9 M0 11.5 H9" stroke="#F5F5F5" stroke-width="1"/><circle cx="4.5" cy="10.5" r="5.1" fill="none" stroke="#F5F5F5" stroke-width="1"/></svg>
<div class="t" style="left:1075px;top:306px;color:#1E1E1E;font-size:11.4px;">Calender.aspx</div>
<svg style="left:1035px;top:326px" width="6" height="10" viewBox="0 0 6 10"><path d="M0.7 0.7 L4.8 5 L0.7 9.3 Z" fill="none" stroke="#1E1E1E" stroke-width="1.3"/></svg>
<svg style="left:1055px;top:323px" width="14" height="14" viewBox="0 0 14 14"><path d="M4.9 7 V1.5 H9.3 L12.5 4.7 V12.5 H8" fill="none" stroke="#2D2D2D" stroke-width="1.9"/><circle cx="4.5" cy="10.5" r="4.6" fill="#1C97DA"/><path d="M3.5 6.2 V14.8 M5.5 6.2 V14.8 M0 9.5 H9 M0 11.5 H9" stroke="#F5F5F5" stroke-width="1"/><circle cx="4.5" cy="10.5" r="5.1" fill="none" stroke="#F5F5F5" stroke-width="1"/></svg>
<div class="t" style="left:1075px;top:324px;color:#1E1E1E;font-size:11.4px;">Calender1.aspx</div>
<svg style="left:1035px;top:344px" width="6" height="10" viewBox="0 0 6 10"><path d="M0.7 0.7 L4.8 5 L0.7 9.3 Z" fill="none" stroke="#1E1E1E" stroke-width="1.3"/></svg>
<svg style="left:1055px;top:341px" width="14" height="14" viewBox="0 0 14 14"><path d="M4.9 7 V1.5 H9.3 L12.5 4.7 V12.5 H8" fill="none" stroke="#2D2D2D" stroke-width="1.9"/><circle cx="4.5" cy="10.5" r="4.6" fill="#1C97DA"/><path d="M3.5 6.2 V14.8 M5.5 6.2 V14.8 M0 9.5 H9 M0 11.5 H9" stroke="#F5F5F5" stroke-width="1"/><circle cx="4.5" cy="10.5" r="5.1" fill="none" stroke="#F5F5F5" stroke-width="1"/></svg>
<div class="t" style="left:1075px;top:342px;color:#1E1E1E;font-size:11.4px;">Default.aspx</div>
<svg style="left:1035px;top:362px" width="6" height="10" viewBox="0 0 6 10"><path d="M0.7 0.7 L4.8 5 L0.7 9.3 Z" fill="none" stroke="#1E1E1E" stroke-width="1.3"/></svg>
<svg style="left:1055px;top:359px" width="14" height="14" viewBox="0 0 14 14"><path d="M4.9 7 V1.5 H9.3 L12.5 4.7 V12.5 H8" fill="none" stroke="#2D2D2D" stroke-width="1.9"/><circle cx="4.5" cy="10.5" r="4.6" fill="#1C97DA"/><path d="M3.5 6.2 V14.8 M5.5 6.2 V14.8 M0 9.5 H9 M0 11.5 H9" stroke="#F5F5F5" stroke-width="1"/><circle cx="4.5" cy="10.5" r="5.1" fill="none" stroke="#F5F5F5" stroke-width="1"/></svg>
<div class="t" style="left:1075px;top:360px;color:#1E1E1E;font-size:11.4px;">DeleteQuery1.aspx</div>
<svg style="left:1035px;top:380px" width="6" height="10" viewBox="0 0 6 10"><path d="M0.7 0.7 L4.8 5 L0.7 9.3 Z" fill="none" stroke="#1E1E1E" stroke-width="1.3"/></svg>
<svg style="left:1055px;top:377px" width="14" height="14" viewBox="0 0 14 14"><path d="M4.9 7 V1.5 H9.3 L12.5 4.7 V12.5 H8" fill="none" stroke="#2D2D2D" stroke-width="1.9"/><circle cx="4.5" cy="10.5" r="4.6" fill="#1C97DA"/><path d="M3.5 6.2 V14.8 M5.5 6.2 V14.8 M0 9.5 H9 M0 11.5 H9" stroke="#F5F5F5" stroke-width="1"/><circle cx="4.5" cy="10.5" r="5.1" fill="none" stroke="#F5F5F5" stroke-width="1"/></svg>
<div class="t" style="left:1075px;top:378px;color:#1E1E1E;font-size:11.4px;">Excel.aspx</div>
<svg style="left:1035px;top:398px" width="6" height="10" viewBox="0 0 6 10"><path d="M0.7 0.7 L4.8 5 L0.7 9.3 Z" fill="none" stroke="#1E1E1E" stroke-width="1.3"/></svg>
<svg style="left:1055px;top:395px" width="14" height="14" viewBox="0 0 14 14"><path d="M4.9 7 V1.5 H9.3 L12.5 4.7 V12.5 H8" fill="none" stroke="#2D2D2D" stroke-width="1.9"/><circle cx="4.5" cy="10.5" r="4.6" fill="#1C97DA"/><path d="M3.5 6.2 V14.8 M5.5 6.2 V14.8 M0 9.5 H9 M0 11.5 H9" stroke="#F5F5F5" stroke-width="1"/><circle cx="4.5" cy="10.5" r="5.1" fill="none" stroke="#F5F5F5" stroke-width="1"/></svg>
<div class="t" style="left:1075px;top:396px;color:#1E1E1E;font-size:11.4px;">Formviewss.aspx</div>
<div class="a" style="left:1006px;top:411px;width:330px;height:6px;overflow:hidden">
<div class="t" style="left:69px;top:2px;color:#1E1E1E">web.config</div><svg style="left:49px;top:2px" width="14" height="14"><path d="M.7 .7 H9 L12.3 4 V13 H.7 Z" fill="none" stroke="#1E1E1E" stroke-width="1.3"/></svg>
</div>
<div class="a" style="left:1338px;top:157px;width:17px;height:260px;background:#E8E8EC;"></div>
<svg style="left:1341px;top:166px" width="10" height="5" viewBox="0 0 10 5"><path d="M0 5 H10 L5 0 Z" fill="#C2C3C9"/></svg>
<div class="a" style="left:1342px;top:176px;width:8px;height:105px;background:#C2C3C9;"></div>
<svg style="left:1341px;top:405px" width="10" height="5" viewBox="0 0 10 5"><path d="M0 0 H10 L5 5 Z" fill="#C2C3C9"/></svg>
<div class="a" style="left:1006px;top:417px;width:98px;height:20px;background:#F5F5F5;"></div>
<div class="t" style="left:1011px;top:420px;color:#0E70C0;font-size:11.8px;">Solution Explorer</div>
<div class="a" style="left:1104px;top:418px;width:1px;height:18px;background:#CCCEDB;"></div>
<div class="t" style="left:1110px;top:420px;color:#1E1E1E;font-size:11.8px;">Team Explorer</div>
<div class="a" style="left:1189px;top:418px;width:1px;height:18px;background:#CCCEDB;"></div>
<div class="t" style="left:1195px;top:420px;color:#1E1E1E;font-size:11.8px;">Class View</div>
<div class="a" style="left:1006px;top:437px;width:349px;height:6px;background:#CCCEDB;"></div>
<div class="t" style="left:1010px;top:447px;color:#1E1E1E;font-size:11.6px;">Properties</div>
<svg style="left:1071px;top:451px" width="227" height="5" viewBox="0 0 227 5"><rect width="227" height="5" fill="url(#grip)"/></svg>
<svg style="left:1306px;top:451px" width="7" height="4" viewBox="0 0 7 4"><path d="M0 0 H7 L3.5 3.5 Z" fill="#1E1E1E"/></svg>
<svg style="left:1323px;top:448px" width="8" height="11" viewBox="0 0 8 11"><path d="M1.5 0.5 H6.5 M2.5 0.5 V6 H5.5 V0.5 M0 6.5 H8 M4 6.5 V11" fill="none" stroke="#1E1E1E" stroke-width="1.3"/><rect x="4.5" y="1" width="1.2" height="5" fill="#1E1E1E"/></svg>
<svg style="left:1338px;top:449px" width="10" height="9" viewBox="0 0 10 9"><path d="M.7 .5 L9.3 8.5 M9.3 .5 L.7 8.5" stroke="#1E1E1E" stroke-width="1.5"/></svg>
<div class="a" style="left:1006px;top:464px;width:349px;height:24px;background:#FCFCFC;"></div>
<div class="t" style="left:1012px;top:469px;color:#1E1E1E;font-size:11.5px;font-weight:bold">Tables</div>
<svg style="left:1344px;top:475px" width="6" height="3" viewBox="0 0 6 3"><path d="M0 0 H6 L3 3 Z" fill="#717171"/></svg>
<div class="a" style="left:1009px;top:490px;width:23px;height:22px;background:transparent;border:1px solid #3399FF"></div>
<svg style="left:1013px;top:494px" width="15" height="14" viewBox="0 0 15 14"><rect x="0" y="0" width="4.6" height="4.6" fill="#2D2D2D"/><rect x="0" y="9" width="4.6" height="4.6" fill="#2D2D2D"/><path d="M2.3 1 V3.6 M1 2.3 H3.6 M2.3 10 V12.6 M1 11.3 H3.6" stroke="#EEEEF2" stroke-width="0.9"/><path d="M6 0.5 H10.8 M6 2.5 H10.8 M6 4.5 H10.8 M6 6.5 H10.8 M6 8.5 H10.8 M6 10.5 H10.8 M6 12.5 H10.8 M12 2.5 H14 M12 4.5 H14 M12 6.5 H14 M12 8.5 H14 M12 12.5 H14" stroke="#2D2D2D" stroke-width="1"/></svg>
<svg style="left:1036px;top:494px" width="15" height="14" viewBox="0 0 15 14"><rect x="0" y="0" width="7" height="6.7" fill="#2D2D2D"/><text x="1" y="6" font-size="6.5" font-family="Liberation Sans" font-weight="bold" fill="#EEEEF2">A</text><path d="M1.2 10 H6 L1.2 14 H6" fill="none" stroke="#2D2D2D" stroke-width="1.6"/><path d="M11 3 V12 M8.3 8.8 L11 12.3 L13.7 8.8" fill="none" stroke="#2D2D2D" stroke-width="1.8"/></svg>
<div class="a" style="left:1058px;top:492px;width:1px;height:20px;background:#CCCEDB;"></div>
<svg style="left:1066px;top:494px" width="12" height="13" viewBox="0 0 12 13"><path d="M1.5 11.5 L6 7" stroke="#C6C6C6" stroke-width="2.8" stroke-linecap="round"/><circle cx="8.2" cy="4.8" r="3.6" fill="#C6C6C6"/><path d="M8 3 L10 1" stroke="#EEEEF2" stroke-width="2"/></svg>
<div class="a" style="left:1006px;top:515px;width:349px;height:184px;background:#F5F5F5;"></div>
<div class="a" style="left:1006px;top:636px;width:349px;height:1px;background:#E6E6EB;"></div>
<div class="a" style="left:64px;top:180px;width:228px;height:96px;background:rgba(0,0,0,0.22);filter:blur(1px)"></div>
<div class="a" style="left:61px;top:177px;width:229px;height:97px;background:#E7E8EC;border:1px solid #CCCEDB"></div>
<div class="a" style="left:63px;top:180px;width:225px;height:22px;background:#F5F6F9;"></div>
<div class="t" style="left:98px;top:185px;color:#1E1E1E;font-size:12px;">Add New Table</div>
<div class="t" style="left:98px;top:207px;color:#1E1E1E;font-size:12px;">New Query</div>
<div class="a" style="left:94px;top:225px;width:192px;height:1px;background:#CCCEDB;"></div>
<svg style="left:70px;top:231px" width="14" height="14" viewBox="0 0 14 14"><path d="M6.2 1.6 A5.2 5.5 0 0 0 6.2 12.4" fill="none" stroke="#2D2D2D" stroke-width="2.6"/><path d="M7.8 1.6 A5.2 5.5 0 0 1 7.8 12.4" fill="none" stroke="#2D2D2D" stroke-width="2.6"/><path d="M0.8 1.2 L7.2 0.3 L6.6 6.2 Z" fill="#2D2D2D"/><path d="M13.2 12.8 L6.8 13.7 L7.4 7.8 Z" fill="#2D2D2D"/></svg>
<div class="t" style="left:98px;top:232px;color:#1E1E1E;font-size:12px;">Refresh</div>
<svg style="left:71px;top:253px" width="13" height="13" viewBox="0 0 13 13"><path d="M1.5 11.5 L6 7" stroke="#424242" stroke-width="2.8" stroke-linecap="round"/><circle cx="8.5" cy="4.5" r="3.8" fill="#424242"/><path d="M8.5 2.5 L10.8 0.2" stroke="#E7E8EC" stroke-width="2.2"/></svg>
<div class="t" style="left:98px;top:254px;color:#1E1E1E;font-size:12px;">Properties</div>
<div class="t" style="left:218px;top:254px;color:#1E1E1E;font-size:12px;">Alt+Enter</div>
<svg style="left:0;top:0" width="300" height="230"><path d="M26 187 L61 187 L61 207.5 L26 208 Z" fill="#FFF500"/><path d="M87 179 L183 178.6 L205 180 Q210 181 210 186 L210 202 L87 202 Z" fill="#FFF500"/></svg>
<div class="t" style="left:98px;top:185px;color:#1E1E1E;font-size:12px;">Add New Table</div>
<svg style="left:0;top:0" width="300" height="230"><path d="M29.5 186 L29.5 167 Q45 166 64 165.5 L80 165 Q83.5 168 83.5 176 L83 195 Q82 203 72 203.5 L61 203.5" fill="none" stroke="#FFF500" stroke-width="1.2"/><path d="M87 202 L87 204.5 L96 206.8 L138 207.5 L209.5 209 L209.5 202" fill="none" stroke="#FFF500" stroke-width="1.2"/><path d="M85 178 L183 178 L205 179.5" fill="none" stroke="#FFF500" stroke-width="1"/></svg>
<div class="a" style="left:0px;top:705px;width:1360px;height:23px;background:#007ACC;"></div>
<div class="t" style="left:5px;top:710px;color:#FFFFFF;font-size:12px;">Ready</div>
<div class="a" style="left:0;top:728px;width:1360px;height:40px;background:linear-gradient(90deg,#225D8E 0%,#2A74AC 4%,#3290CF 8%,#3896D3 15%,#44A0D8 25%,#49A3DA 35%,#429AD5 45%,#3A90CF 52%,#3087C9 58%,#2A7BBF 66%,#2670B5 72%,#2363A8 80%,#205BA0 86%,#1E4F8C 90%,#1B3F6F 95%,#183A66 100%)"></div>
<div class="a" style="left:0;top:728px;width:1360px;height:40px;background:linear-gradient(180deg,rgba(255,255,255,0.08),rgba(255,255,255,0.0) 40%,rgba(0,0,0,0.04))"></div>
<svg style="left:0;top:728px;overflow:hidden" width="1360" height="40"><defs><filter id="bl" x="-50%" y="-50%" width="200%" height="200%"><feGaussianBlur stdDeviation="6"/></filter><filter id="bl2" x="-50%" y="-50%" width="200%" height="200%"><feGaussianBlur stdDeviation="1.6"/></filter></defs><path d="M0 22 C150 8 350 4 560 14" fill="none" stroke="#A8D8F5" stroke-width="10" opacity="0.22" filter="url(#bl)"/><path d="M895 0 C925 8 955 22 980 40" fill="none" stroke="#A9D4F4" stroke-width="7" opacity="0.75" filter="url(#bl2)"/><path d="M860 0 C868 14 872 28 875 40" fill="none" stroke="#1E5E9E" stroke-width="10" opacity="0.18" filter="url(#bl)"/><path d="M690 10 C780 8 880 18 960 40" fill="none" stroke="#8DC3EA" stroke-width="16" opacity="0.22" filter="url(#bl)"/></svg>
<div class="a" style="left:0px;top:728px;width:1360px;height:1px;background:#0A2038;"></div>
<div class="a" style="left:0px;top:729px;width:1360px;height:1px;background:#8DBEE0;opacity:0.75"></div>
<svg style="left:8px;top:729px" width="39" height="39" viewBox="0 0 39 39"><defs><linearGradient id="orbt" x1="0" y1="0" x2="0" y2="1"><stop offset="0" stop-color="#D9E1E8"/><stop offset="1" stop-color="#7C8EA0"/></linearGradient><linearGradient id="orbb" x1="0" y1="0" x2="0" y2="1"><stop offset="0" stop-color="#0B3766"/><stop offset="0.6" stop-color="#0E6DB0"/><stop offset="1" stop-color="#1FD6F8"/></linearGradient></defs><circle cx="19" cy="19.3" r="18.6" fill="#0C3560" stroke="#A9C9E0" stroke-width="0.9"/><circle cx="19" cy="19.3" r="17" fill="url(#orbb)"/><path d="M2.2 18 A17 17 0 0 1 35.8 18 C30 17 25 16.5 19 16.5 C13 16.5 8 17 2.2 18 Z" fill="url(#orbt)"/><path d="M10 9 C12.5 8 15 8 18 9.5 L16.8 18 C14 16.5 11.5 16.5 8.8 17.5 Z" fill="#E8531E"/><path d="M20 11.5 C23 13 26 13 29.5 11.5 L28 20 C25 21.5 22 21.5 19 20 Z" fill="#8DC63F"/><path d="M8.5 19 C11.2 18 13.8 18 16.5 19.5 L15.5 27 C12.8 25.5 10.2 25.5 7.3 26.5 Z" fill="#2A9BE0"/><path d="M18.5 21 C21.5 22.5 24.5 22.5 27.5 21 L26.3 28.5 C23.3 30 20.3 30 17.3 28.5 Z" fill="#FFC31F"/></svg>
<svg style="left:73px;top:733px" width="32" height="30" viewBox="0 0 32 30"><defs><radialGradient id="ieg" cx="45%" cy="80%" r="75%"><stop offset="0" stop-color="#5BE3FF"/><stop offset="0.5" stop-color="#1E82D2"/><stop offset="1" stop-color="#0B3F8A"/></radialGradient></defs><circle cx="17.5" cy="14" r="12.2" fill="#0A3070"/><circle cx="17.5" cy="14" r="11" fill="url(#ieg)"/><path d="M7 12.5 C8 6 13 4 17.5 4 C22 4 27 6 28 12 Z" fill="#C6E6F8" opacity="0.55"/><path d="M12 14.2 H23.5 C23.5 11 21 8.8 17.8 8.8 C14.5 8.8 12.2 11 12 14.2 Z" fill="#1B5FA8"/><path d="M13.3 13 C13.8 11 15.5 10 17.8 10 C20 10 21.8 11 22.2 13 Z" fill="#8ED2F5"/><path d="M12 17.5 H28.5" stroke="#0A3070" stroke-width="1"/><path d="M12.2 17.5 C13 20.5 15.5 22 18 22 C20.5 22 22.5 21 23.5 19 H28.2 C27 23.5 23 26 18 26" fill="none" stroke="none"/><path d="M4 27 C0 23 8 11 18 5 C25 1 31 0 31.5 3 C31.8 4.5 30.5 6 29.5 7" fill="none" stroke="#F4B41A" stroke-width="2.2" stroke-linecap="round"/><path d="M4 27 C6 28.5 9 28 12 26.5" fill="none" stroke="#E8A013" stroke-width="2" stroke-linecap="round"/></svg>
<svg style="left:199px;top:737px" width="27" height="24" viewBox="0 0 27 24"><rect x="8" y="1" width="17" height="21" fill="#C9DEEF" stroke="#9BB9D3" stroke-width="0.8"/><rect x="5" y="0" width="17" height="22" fill="#DCEAF6" stroke="#A9C3DA" stroke-width="0.8"/><circle cx="12" cy="11.5" r="9" fill="#F07C22"/><circle cx="12" cy="11.5" r="7" fill="#F68A2E"/><path d="M9 6.5 L17 11.5 L9 16.5 Z" fill="#fff"/></svg>
<svg style="left:261px;top:734px" width="28" height="28" viewBox="0 0 28 28"><circle cx="14" cy="14" r="14" fill="#DB4437"/><path d="M14 14 L1.9 21 A14 14 0 0 0 21 26.1 Z" fill="#0F9D58"/><path d="M14 14 L21 26.1 A14 14 0 0 0 26.1 7 L14 7 Z" fill="#F4B400"/><path d="M14 14 L26.1 7 H14 Z" fill="#F4B400"/><path d="M1.9 21 A14 14 0 0 1 4 5.5 L14 14 Z" fill="#0F9D58"/><circle cx="14" cy="14" r="6.2" fill="#fff"/><circle cx="14" cy="14" r="4.8" fill="#4285F4"/></svg>
<svg style="left:322px;top:733px" width="30" height="30" viewBox="0 0 30 30"><defs><radialGradient id="ffg" cx="60%" cy="35%" r="60%"><stop offset="0" stop-color="#7FD0F8"/><stop offset="0.55" stop-color="#2F7BC8"/><stop offset="1" stop-color="#1B3F8A"/></radialGradient><radialGradient id="ffo" cx="30%" cy="70%" r="75%"><stop offset="0" stop-color="#F9C23A"/><stop offset="0.45" stop-color="#F07A1E"/><stop offset="1" stop-color="#C63A17"/></radialGradient></defs><circle cx="15" cy="15" r="14.5" fill="url(#ffo)"/><circle cx="17.5" cy="12.5" r="9" fill="url(#ffg)"/><path d="M8.5 8 C10 4 13 2.5 16 3 C13 5 12.5 8 14 10 C11 11 10.5 14 12 16.5 C14 19.5 19 20 22.5 17.5 C20 22 13 23 9.5 19 C7 16 7 11 8.5 8 Z" fill="url(#ffo)"/><path d="M25 4 C28 7 29.5 11 29 15 C27.5 11 26.5 8 25 4 Z" fill="#F7B52B"/></svg>
<div class="a" style="left:122px;top:729px;width:58px;height:40px;border:1px solid rgba(10,40,70,0.75);border-radius:3px;background:linear-gradient(160deg,rgba(255,255,255,0.55),rgba(255,255,255,0.30) 45%,rgba(255,255,255,0.18));box-shadow:inset 0 0 0 1px rgba(255,255,255,0.75)"></div>
<svg style="left:135px;top:735px" width="32" height="28" viewBox="0 0 32 28"><path d="M1 4 H10 L12 2 H30 V26 H1 Z" fill="#E3C46A"/><rect x="4" y="1" width="6" height="4" fill="#3DB83D"/><rect x="12" y="3" width="6" height="4" fill="#E04040"/><rect x="20" y="5" width="6" height="4" fill="#3A8EE0"/><path d="M3 8 H29 V27 H3 Z" fill="#FBE39A" stroke="#D0A945" stroke-width="0.8"/><path d="M9 27 V19 C9 17 10 16 12 16 H21 C23 16 24 17 24 19 V27" fill="#A8D4F0" stroke="#6AA9D6" stroke-width="1"/><rect x="11" y="22" width="11" height="4" fill="#D7EEFB"/></svg>
<div class="a" style="left:370px;top:729px;width:58px;height:40px;border:1px solid rgba(10,40,70,0.75);border-radius:3px;background:linear-gradient(160deg,rgba(255,255,255,0.55),rgba(255,255,255,0.30) 45%,rgba(255,255,255,0.18));box-shadow:inset 0 0 0 1px rgba(255,255,255,0.75)"></div>
<svg style="left:384px;top:735px" width="30" height="28" viewBox="0 0 30 28"><rect x="2" y="4" width="15" height="15" transform="rotate(-15 9 11)" fill="#A7DF8E" stroke="#7CC15E" stroke-width="0.8"/><rect x="6" y="9" width="12" height="13" fill="#B3D6F2"/><rect x="10" y="6" width="16" height="17" transform="rotate(-18 18 14)" fill="#FBE46F" stroke="#E8C83A" stroke-width="0.8"/></svg>
<div class="a" style="left:431px;top:729px;width:59px;height:40px;border:1px solid rgba(10,40,70,0.75);border-radius:3px;background:linear-gradient(160deg,rgba(255,255,255,0.88),rgba(255,255,255,0.55) 45%,rgba(255,255,255,0.42));box-shadow:inset 0 0 0 1px rgba(255,255,255,0.75)"></div>
<div class="a" style="left:445px;top:732px;width:32px;height:32px;background:#68217A;"></div>
<svg style="left:449px;top:737px" width="24" height="22" viewBox="0 0 24 22"><path d="M17 0.5 L22.5 2.8 L22.5 19.2 L17 21.5 L8 14 L3.5 17.5 L1 16 L1 6 L3.5 4.5 L8 8 Z M17 6.5 L11.5 11 L17 15.5 Z M3.8 8.2 L3.8 13.8 L6.5 11 Z" fill="#fff" fill-rule="evenodd"/></svg>
<svg style="left:1252px;top:747px" width="8" height="5" viewBox="0 0 8 5"><path d="M0 5 L4 0.5 L8 5 Z" fill="#fff"/></svg>
<svg style="left:1272px;top:741px" width="17" height="16" viewBox="0 0 17 16"><path d="M1 1 V15" stroke="#fff" stroke-width="1.5"/><path d="M2 1.5 C5 0.5 7 3 10 2 V8.5 C7 9.5 5 7 2 8 Z" fill="#fff"/><circle cx="12" cy="11.5" r="4.3" fill="#E02020" stroke="#fff" stroke-width="0.8"/><path d="M10 9.5 L14 13.5 M14 9.5 L10 13.5" stroke="#fff" stroke-width="1.3"/></svg>
<svg style="left:1298px;top:742px" width="16" height="15" viewBox="0 0 16 15"><path d="M1 0.5 V6.5 M4 0.5 V6.5 M0.5 5.5 H4.5" stroke="#fff" stroke-width="1.2"/><rect x="4" y="3.5" width="11" height="8" fill="none" stroke="#fff" stroke-width="1.5"/><path d="M9.5 11.5 V13.5 M6 14 H13" stroke="#fff" stroke-width="1.5"/></svg>
<svg style="left:1321px;top:743px" width="15" height="13" viewBox="0 0 15 13"><path d="M0.5 4 H3.5 L7.5 0.5 V12.5 L3.5 9 H0.5 Z" fill="#fff"/><path d="M9.5 4 C10.5 5 10.5 8 9.5 9 M11.5 2.5 C13 4.5 13 8.5 11.5 10.5 M13.5 1 C15.5 4 15.5 9 13.5 12" fill="none" stroke="#fff" stroke-width="1.1"/></svg>
<div class="a" style="left:1345px;top:729px;width:15px;height:39px;border:1px solid rgba(255,255,255,0.45);border-right:none;background:linear-gradient(180deg,rgba(255,255,255,0.2),rgba(255,255,255,0.05))"></div>
</body></html>
